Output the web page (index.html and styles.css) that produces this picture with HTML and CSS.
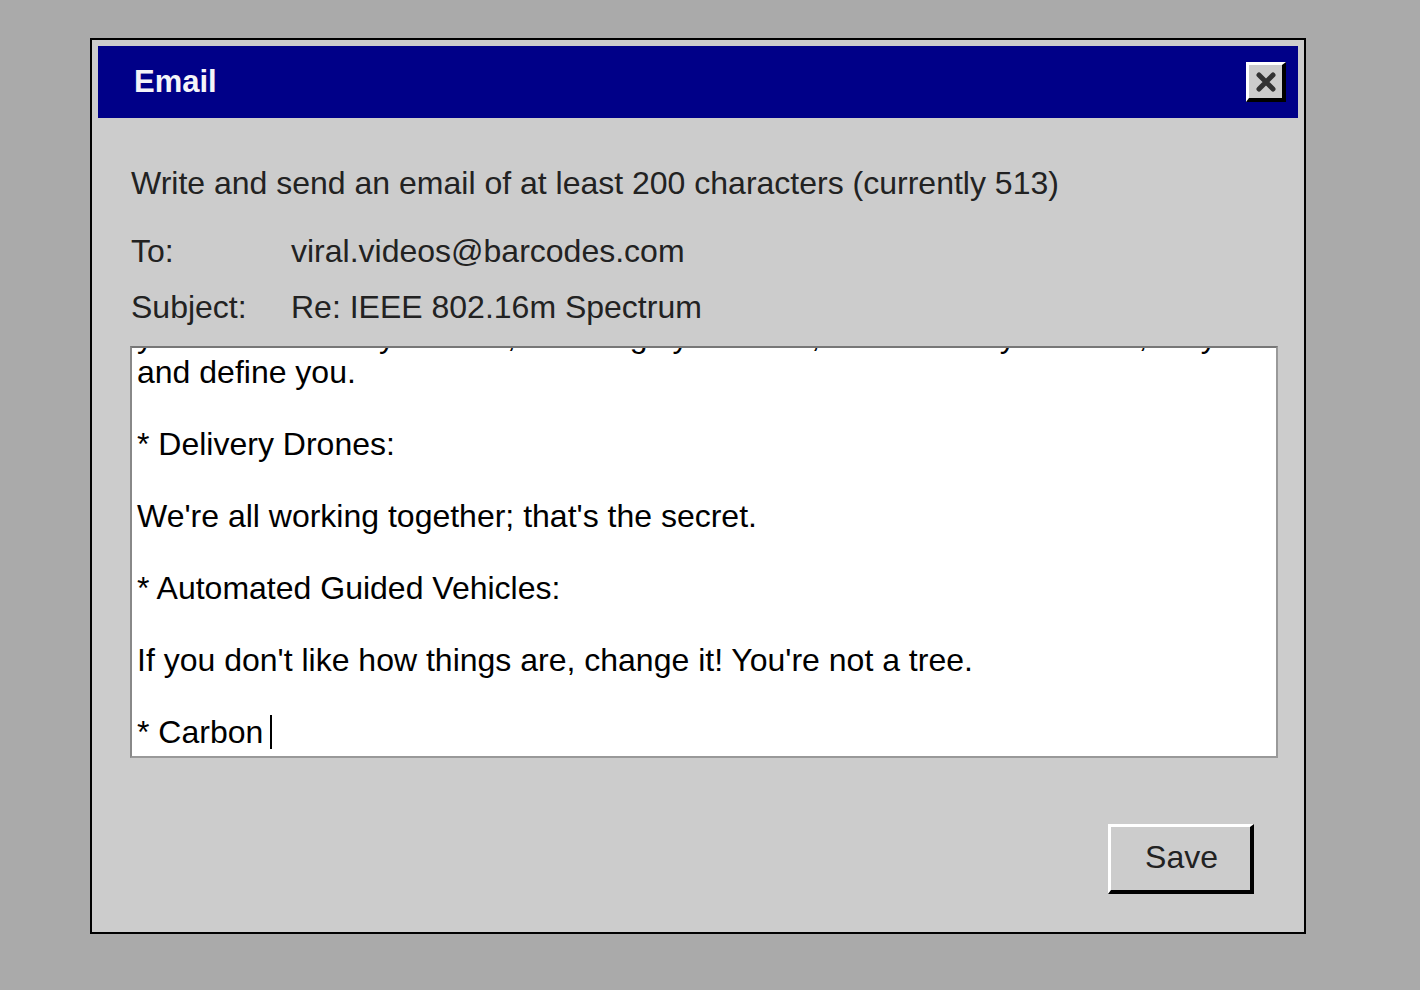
FILE: index.html
```html
<!DOCTYPE html>
<html>
<head>
<meta charset="utf-8">
<title>Email</title>
<link rel="stylesheet" href="styles.css">
</head>
<body>
<div class="dialog">
  <div class="titlebar">
    <span class="title">Email</span>
    <div class="close">
      <svg width="22" height="22" viewBox="0 0 22 22"><path d="M4 4 L18 18 M18 4 L4 18" stroke="#333" stroke-width="5" stroke-linecap="round"/></svg>
    </div>
  </div>
  <div class="content">
    <div class="instructions">Write and send an email of at least 200 characters (currently 513)</div>
    <div class="field field-to"><span class="label">To:</span><span class="value">viral.videos@barcodes.com</span></div>
    <div class="field field-subject"><span class="label">Subject:</span><span class="value">Re: IEEE 802.16m Spectrum</span></div>
    <div class="editor">
      <div class="editor-text">
        <div class="line">you can do what you want; the things you make, the choices you make, they create</div>
        <div class="line">and define you.</div>
        <div class="line">&nbsp;</div>
        <div class="line">* Delivery Drones:</div>
        <div class="line">&nbsp;</div>
        <div class="line">We're all working together; that's the secret.</div>
        <div class="line">&nbsp;</div>
        <div class="line">* Automated Guided Vehicles:</div>
        <div class="line">&nbsp;</div>
        <div class="line">If you don't like how things are, change it! You're not a tree.</div>
        <div class="line">&nbsp;</div>
        <div class="line">* Carbon <span class="caret"></span></div>
      </div>
    </div>
    <div class="actions">
      <div class="save">Save</div>
    </div>
  </div>
</div>
</body>
</html>
```

FILE: styles.css
```css
html, body {
  margin: 0;
  padding: 0;
}
body {
  background: #aaaaaa;
  font-family: "Liberation Sans", Arial, sans-serif;
  padding: 38px 0 0 90px;
  height: 990px;
  box-sizing: border-box;
}
.dialog {
  width: 1216px;
  height: 896px;
  box-sizing: border-box;
  border: 2px solid #000;
  background: #cccccc;
  padding: 6px;
}
.titlebar {
  height: 72px;
  background: #000088;
  display: flex;
  align-items: center;
  justify-content: space-between;
  padding: 0 12px 0 36px;
}
.title {
  color: #f4f4f8;
  font-weight: bold;
  font-size: 31px;
  line-height: 36px;
}
.close {
  width: 40px;
  height: 40px;
  box-sizing: border-box;
  background: #cccccc;
  border-top: 3px solid #fff;
  border-left: 3px solid #fff;
  border-right: 4px solid #000;
  border-bottom: 4px solid #000;
  display: flex;
  align-items: center;
  justify-content: center;
}
.content {
  padding: 47px 20px 0 32px;
  color: #222;
  font-size: 32px;
  line-height: 36px;
}
.instructions {
  margin-left: 1px;
}
.field {
  display: flex;
  margin-left: 1px;
}
.field-to {
  margin-top: 32px;
}
.field-subject {
  margin-top: 20px;
}
.label {
  width: 160px;
  flex: none;
}
.editor {
  margin-top: 21px;
  width: 1148px;
  height: 412px;
  box-sizing: border-box;
  background: #fff;
  border-top: 2px solid #777;
  border-left: 2px solid #888;
  border-right: 2px solid #999;
  border-bottom: 2px solid #999;
  overflow: hidden;
  display: flex;
  flex-direction: column;
  justify-content: flex-end;
  padding: 0 4px 6px 5px;
}
.editor-text {
  color: #000;
  white-space: nowrap;
}
.caret {
  display: inline-block;
  width: 0;
  height: 34px;
  border-left: 2px solid #000;
  vertical-align: -6px;
  margin-left: -2px;
}
.actions {
  display: flex;
  justify-content: flex-end;
  padding-right: 24px;
  margin-top: 66px;
}
.save {
  width: 146px;
  height: 70px;
  box-sizing: border-box;
  border-top: 3px solid #fff;
  border-left: 3px solid #fff;
  border-right: 4px solid #000;
  border-bottom: 4px solid #000;
  display: flex;
  align-items: center;
  justify-content: center;
  padding: 0 0 3px 2px;
  color: #222;
  font-size: 32px;
}
```
